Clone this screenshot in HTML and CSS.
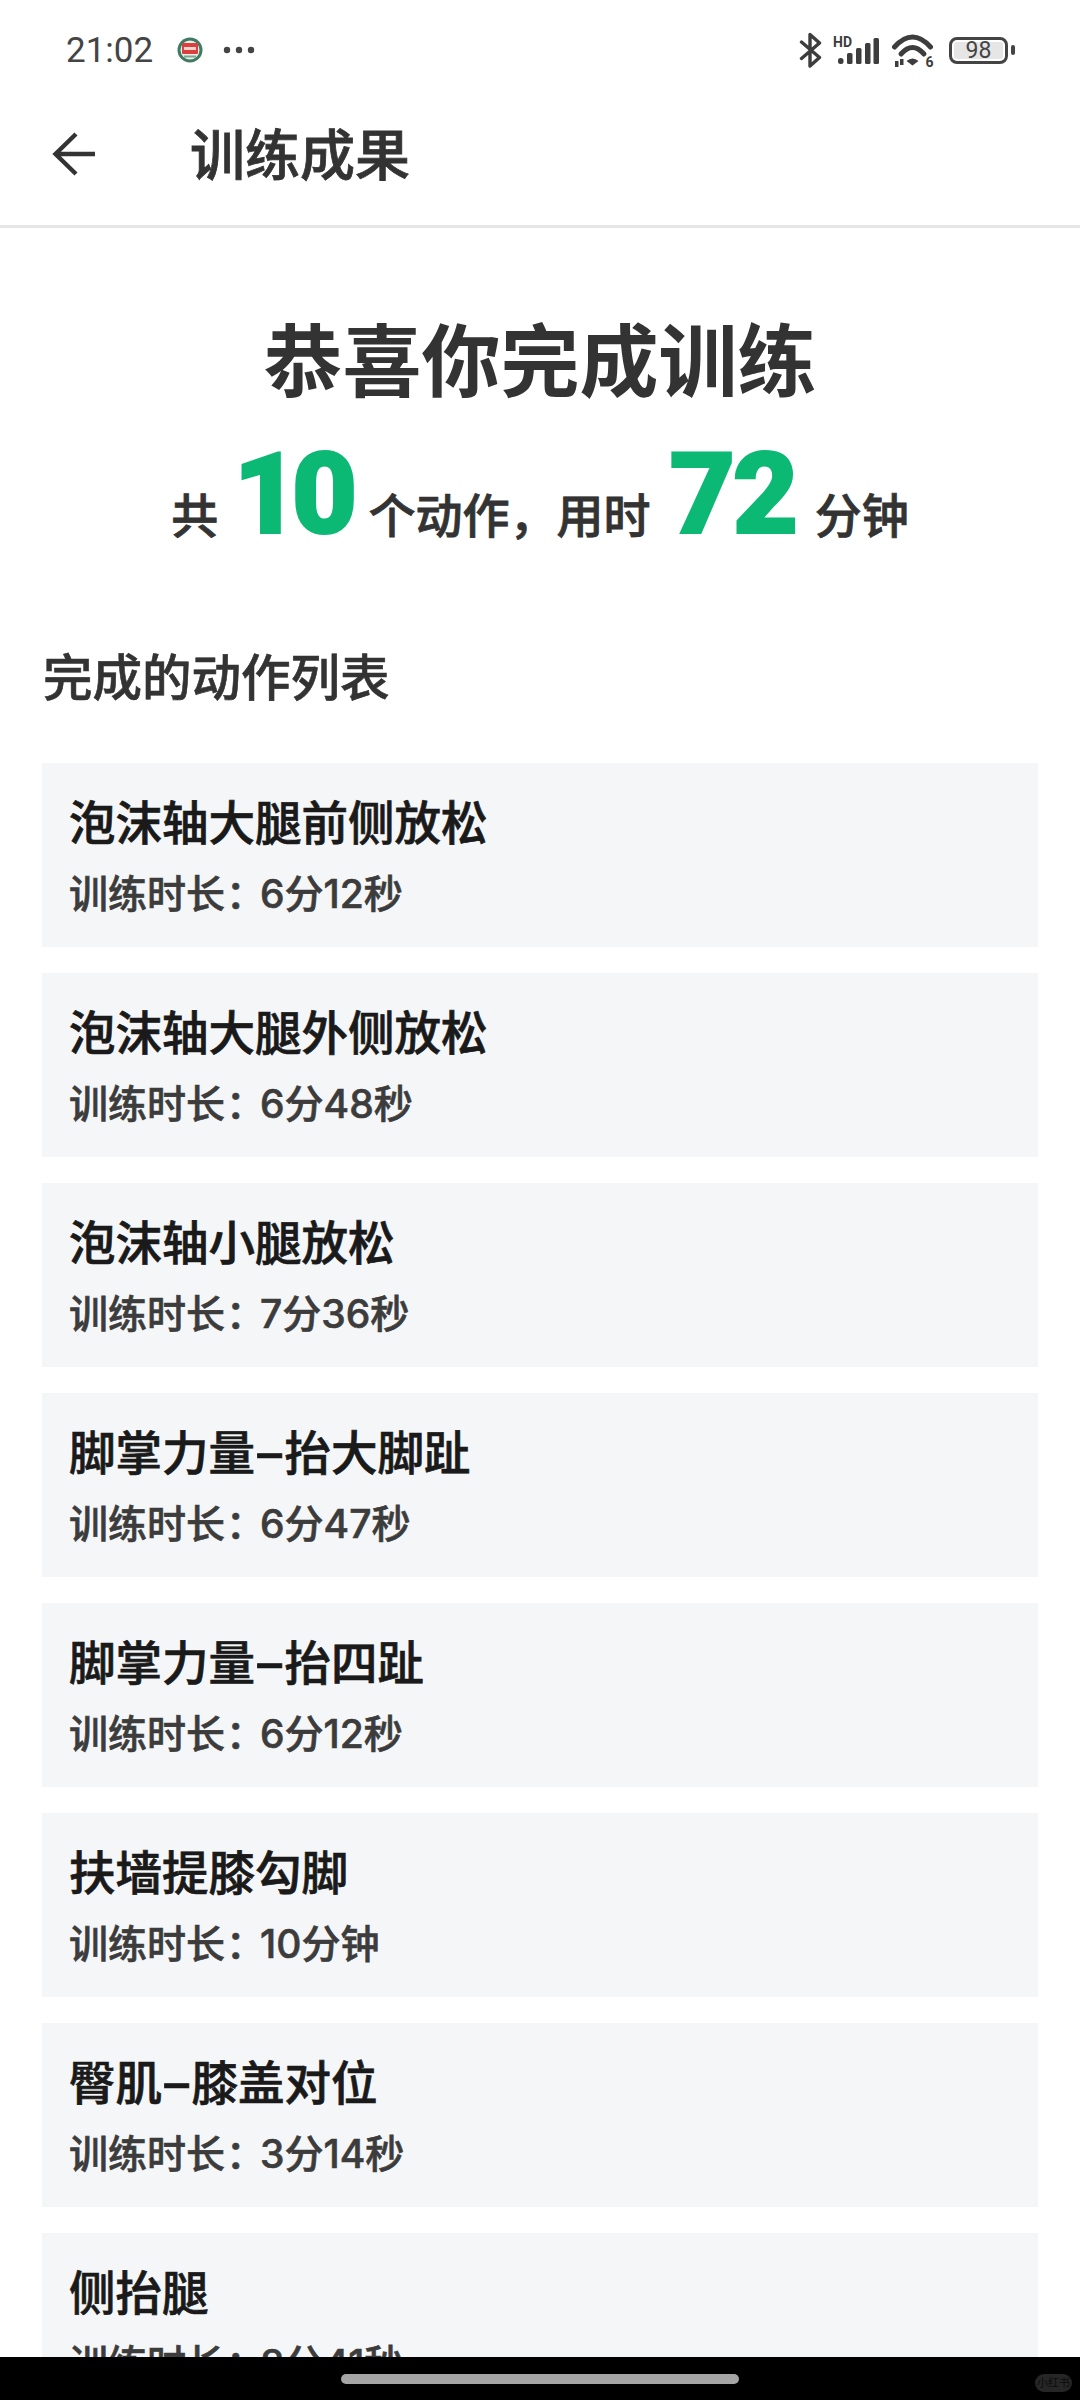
FILE: index.html
```html
<!DOCTYPE html>
<html lang="zh-CN">
<head>
  <meta charset="UTF-8" />
  <meta name="viewport" content="width=device-width, initial-scale=1.0"/>
  <title>训练成果</title>
  <link rel="stylesheet" href="styles.css">
</head>
<body>
  <div class="status-bar">
    <div class="status-left">
      <span class="time">21:02</span>
      <svg class="app-icon" viewBox="0 0 26 26" width="26" height="26">
        <circle cx="13" cy="13" r="12.5" fill="#3f7a63"/>
        <circle cx="13" cy="13" r="9.5" fill="#e9efe9"/>
        <rect x="5" y="6" width="16" height="11" rx="1" fill="#dc3f3d"/>
        <rect x="7" y="10" width="12" height="3" fill="#f6d5d0"/>
        <rect x="7" y="18.5" width="12" height="2" fill="#7da592"/>
      </svg>
      <svg class="dots" viewBox="0 0 32 8" width="32" height="8">
        <circle cx="4" cy="4" r="3.2" fill="#444"/>
        <circle cx="16" cy="4" r="3.2" fill="#444"/>
        <circle cx="28" cy="4" r="3.2" fill="#444"/>
      </svg>
    </div>
    <div class="status-right">
      <svg class="ic-bt" viewBox="0 0 24 36" width="24" height="36">
        <path d="M2.5 10 L20.5 25.5 L11 34 V2.5 L20.5 11 L2.5 26.5" fill="none" stroke="#3d3d3d" stroke-width="3.4" stroke-linejoin="round" stroke-linecap="round"/>
      </svg>
      <svg class="ic-signal" viewBox="0 0 46 36" width="46" height="36">
        <text x="0" y="15" class="hd">HD</text>
        <rect x="5" y="26" width="5.5" height="6" rx="2.5" fill="#3d3d3d"/>
        <rect x="14" y="21" width="5.5" height="11" rx="1.5" fill="#3d3d3d"/>
        <rect x="23" y="16" width="5.5" height="16" rx="1.5" fill="#3d3d3d"/>
        <rect x="32" y="11" width="5.5" height="21" rx="1.5" fill="#3d3d3d"/>
        <rect x="40.5" y="6" width="5.5" height="26" rx="1.5" fill="#3d3d3d"/>
      </svg>
      <svg class="ic-wifi" viewBox="0 0 42 42" width="42" height="42">
        <g transform="translate(0 3)">
          <path d="M2.5 15 Q20.5 -5 38.5 15" fill="none" stroke="#3d3d3d" stroke-width="5" stroke-linecap="round"/>
          <path d="M9 22 Q20.5 9 32 22" fill="none" stroke="#3d3d3d" stroke-width="5" stroke-linecap="round"/>
          <path d="M14.5 29 Q20.5 24 26.5 29 L20.5 33.5 Z" fill="#3d3d3d"/>
          <rect x="3" y="29" width="3.5" height="6" fill="#3d3d3d"/>
          <rect x="8" y="27" width="3.5" height="6" fill="#3d3d3d"/>
          <text x="33.5" y="35" class="wifi-gen">6</text>
        </g>
      </svg>
      <div class="battery">
        <div class="battery-body"><span class="battery-level">98</span></div>
        <div class="battery-tip"></div>
      </div>
    </div>
  </div>

  <header class="toolbar">
    <svg class="back" viewBox="0 0 44 44" width="44" height="44">
      <path d="M43 22 H4 M24 2 L3.5 22 L24 42" fill="none" stroke="#333" stroke-width="4.4"/>
    </svg>
    <h1>训练成果</h1>
  </header>

  <main>
    <section class="summary">
      <h2>恭喜你完成训练</h2>
      <p class="stats">共<b class="count">10</b>个动作，用时<b>72</b>分钟</p>
    </section>

    <h3 class="list-title">完成的动作列表</h3>

    <ul class="list">
      <li><h4>泡沫轴大腿前侧放松</h4><p>训练时长<span class="colon">：</span>6分12秒</p></li>
      <li><h4>泡沫轴大腿外侧放松</h4><p>训练时长<span class="colon">：</span>6分48秒</p></li>
      <li><h4>泡沫轴小腿放松</h4><p>训练时长<span class="colon">：</span>7分36秒</p></li>
      <li><h4>脚掌力量<span class="dash">-</span>抬大脚趾</h4><p>训练时长<span class="colon">：</span>6分47秒</p></li>
      <li><h4>脚掌力量<span class="dash">-</span>抬四趾</h4><p>训练时长<span class="colon">：</span>6分12秒</p></li>
      <li><h4>扶墙提膝勾脚</h4><p>训练时长<span class="colon">：</span>10分钟</p></li>
      <li><h4>臀肌<span class="dash">-</span>膝盖对位</h4><p>训练时长<span class="colon">：</span>3分14秒</p></li>
      <li><h4>侧抬腿</h4><p>训练时长<span class="colon">：</span>8分41秒</p></li>
    </ul>
  </main>

  <div class="nav-bar">
    <div class="home-pill"></div>
    <span class="watermark">小红书</span>
  </div>
</body>
</html>
```
FILE: styles.css
```css
* {
  box-sizing: border-box;
}
html, body {
  height: 2400px;
}
body {
  margin: 0;
  position: relative;
  overflow: hidden;
  background: #fff;
  color: #333;
  font-family: "Inter", "Noto Sans CJK SC", sans-serif;
}
.status-bar {
  height: 100px;
  padding: 0 65px 0 66px;
  display: flex;
  justify-content: space-between;
  align-items: center;
}
.status-left {
  display: flex;
  align-items: center;
}
.time {
  font-family: "Roboto", sans-serif;
  font-size: 35px;
  color: #444;
}
.app-icon {
  margin-left: 24px;
}
.dots {
  margin-left: 20px;
}
.status-right {
  display: flex;
  align-items: center;
}
.ic-signal {
  margin-left: 10px;
}
.ic-wifi {
  margin-left: 13px;
}
.hd {
  font: 700 14px "Roboto", sans-serif;
  fill: #3d3d3d;
}
.wifi-gen {
  font: 700 14px "Roboto", sans-serif;
  fill: #3d3d3d;
}
.battery {
  display: flex;
  align-items: center;
  gap: 3px;
  margin-left: 15px;
}
.battery-body {
  width: 59px;
  height: 27px;
  border: 3px solid #444;
  border-radius: 8px;
  padding: 2px;
}
.battery-level {
  display: block;
  height: 100%;
  background: #e6e6e6;
  border-radius: 3px;
  font-family: "Roboto", sans-serif;
  font-size: 23px;
  line-height: 17px;
  text-align: center;
  color: #444;
}
.battery-tip {
  width: 4px;
  height: 10px;
  background: #444;
  border-radius: 2px;
}
.toolbar {
  height: 128px;
  padding: 0 0 18px 52px;
  display: flex;
  align-items: center;
  border-bottom: 3px solid #e6e6e6;
}
.toolbar h1 {
  margin: 0 0 6px 94px;
  font-size: 55px;
  font-weight: 500;
  -webkit-text-stroke: 0.8px #333;
  color: #333;
}
.summary {
  text-align: center;
}
.summary h2 {
  margin: 0;
  padding-top: 78px;
  font-size: 79px;
  line-height: 112px;
  font-weight: 700;
  color: #333;
}
.stats {
  margin: 0;
  padding-top: 11px;
  font-size: 47px;
  font-weight: 500;
  -webkit-text-stroke: 0.8px #333;
  line-height: 130px;
  color: #333;
}
.stats b {
  margin: 0 19px;
  font-family: "Roboto", sans-serif;
  font-size: 114px;
  font-weight: 900;
  letter-spacing: -3px;
  -webkit-text-stroke: 2px #0cb974;
  color: #0cb974;
}
.stats .count {
  margin-left: 15px;
  letter-spacing: -8px;
}
.list-title {
  margin: 62px 0 0 43px;
  font-size: 49.5px;
  line-height: 70px;
  font-weight: 500;
  -webkit-text-stroke: 0.6px #333;
  color: #333;
}
.list {
  list-style: none;
  margin: 50px 42px 0;
  padding: 0;
  display: flex;
  flex-direction: column;
  gap: 26px;
}
.list li {
  height: 184px;
  padding: 29px 27px 0;
  background: #f5f6f8;
}
.list h4 {
  margin: 0;
  font-size: 46.5px;
  line-height: 62px;
  font-weight: 500;
  -webkit-text-stroke: 0.7px #1a1a1a;
  color: #1a1a1a;
}
.dash {
  display: inline-block;
  margin: 0 4px;
  transform: scaleX(1.6);
}
.list p {
  margin: 13px 0 0;
  font-size: 39px;
  line-height: 54px;
  font-weight: 500;
  -webkit-text-stroke: 0.6px #3c3c3c;
  color: #3c3c3c;
}
.colon {
  letter-spacing: -5px;
  margin-left: 1px;
}
.nav-bar {
  position: absolute;
  left: 0;
  right: 0;
  bottom: 0;
  height: 43px;
  background: #000;
  display: flex;
  justify-content: center;
  align-items: center;
}
.home-pill {
  width: 398px;
  height: 10px;
  border-radius: 5px;
  background: #a5a5a5;
}
.watermark {
  position: absolute;
  right: 8px;
  top: 17px;
  width: 37px;
  height: 18px;
  border-radius: 9px;
  background: #262626;
  color: #0c0c0c;
  font-size: 11px;
  line-height: 18px;
  text-align: center;
}
```
